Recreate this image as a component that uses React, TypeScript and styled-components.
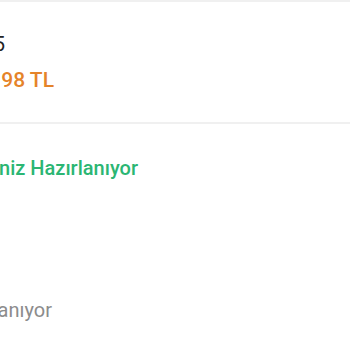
import React from "react";
import styled, { createGlobalStyle } from "styled-components";

const GlobalStyle = createGlobalStyle`
  html, body {
    margin: 0;
    padding: 0;
    background: #ffffff;
    overflow: hidden;
  }
  body {
    font-family: Roboto, "Noto Sans", sans-serif;
  }
`;

const Screen = styled.div`
  width: 350px;
  height: 350px;
  overflow: hidden;
  background: #ffffff;
  border-top: 2px solid #f0f0f0;
  box-sizing: border-box;
`;

const PriceCard = styled.section`
  height: 122px;
  padding-top: 30px;
  box-sizing: border-box;
  border-bottom: 2px solid #f0f0f0;
`;

const StatusBlock = styled.section`
  padding-top: 32px;
`;

const Line = styled.div<{ $end: number; $gap?: number }>`
  width: ${(p) => p.$end}px;
  display: flex;
  justify-content: flex-end;
  white-space: nowrap;
  margin-top: ${(p) => p.$gap ?? 0}px;
`;

const Text = styled.span<{ $color: string; $weight?: number; $size?: number }>`
  font-size: ${(p) => p.$size ?? 20}px;
  line-height: 24px;
  font-weight: ${(p) => p.$weight ?? 400};
  color: ${(p) => p.$color};
`;

export default function App() {
  return (
    <>
      <GlobalStyle />
      <Screen>
        <PriceCard>
          <Line $end={5}>
            <Text $color="#222222">Sipariş No: 125</Text>
          </Line>
          <Line $end={54} $gap={12}>
            <Text $color="#e58329" $weight={500} $size={21}>
              Tutar: 98 TL
            </Text>
          </Line>
        </PriceCard>
        <StatusBlock>
          <Line $end={138}>
            <Text $color="#2bb673" $weight={500}>
              Siparişiniz Hazırlanıyor
            </Text>
          </Line>
          <Line $end={52} $gap={118}>
            <Text $color="#8c8c8c">Hazırlanıyor</Text>
          </Line>
        </StatusBlock>
      </Screen>
    </>
  );
}
